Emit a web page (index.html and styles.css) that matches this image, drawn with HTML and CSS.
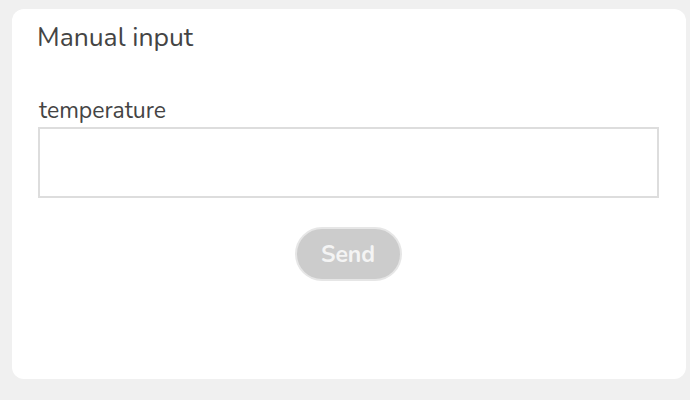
FILE: index.html
```html
<!DOCTYPE html>
<html>
<head>
<meta charset="utf-8">
<link rel="stylesheet" href="styles.css">
</head>
<body>
<div class="page">
  <div class="card">
    <h2 class="title">Manual input</h2>
    <label class="label" for="temp">temperature</label>
    <input class="input" id="temp" type="text">
    <div class="actions">
      <button class="send" disabled>Send</button>
    </div>
  </div>
</div>
</body>
</html>
```
FILE: styles.css
```css
html, body {
  margin: 0;
  padding: 0;
  background: #f0f0f0;
  font-family: "Nunito", "Lato", "Open Sans", sans-serif;
  color: #444;
}
.page {
  width: 690px;
  height: 400px;
  padding: 9px 4px 21px 12px;
  box-sizing: border-box;
}
.card {
  background: #fff;
  border-radius: 12px;
  height: 100%;
  box-sizing: border-box;
  padding: 12px 27px 0 26px;
  display: flex;
  flex-direction: column;
}
.title {
  margin: 0;
  font-size: 26.5px;
  font-weight: 400;
  line-height: 32px;
  color: #444;
  margin-left: -1px;
}
.label {
  margin-top: 44px;
  font-size: 23px;
  font-weight: 400;
  line-height: 28px;
  padding-left: 1px;
  color: #444;
}
.input {
  margin-top: 2px;
  height: 71px;
  box-sizing: border-box;
  border: 2px solid #ddd;
  margin-left: 0;
  outline: none;
  font-size: 18px;
  padding: 0 10px;
}
.actions {
  display: flex;
  justify-content: center;
  margin-top: 29px;
}
.send {
  width: 107px;
  height: 54px;
  border-radius: 27px;
  border: 2px solid #e6e6e6;
  background: #cccccc;
  color: #f4f4f4;
  font-family: "Nunito", "Lato", "Open Sans", sans-serif;
  font-weight: 700;
  font-size: 23px;
  margin-left: -1px;
  padding: 0;
}
```
